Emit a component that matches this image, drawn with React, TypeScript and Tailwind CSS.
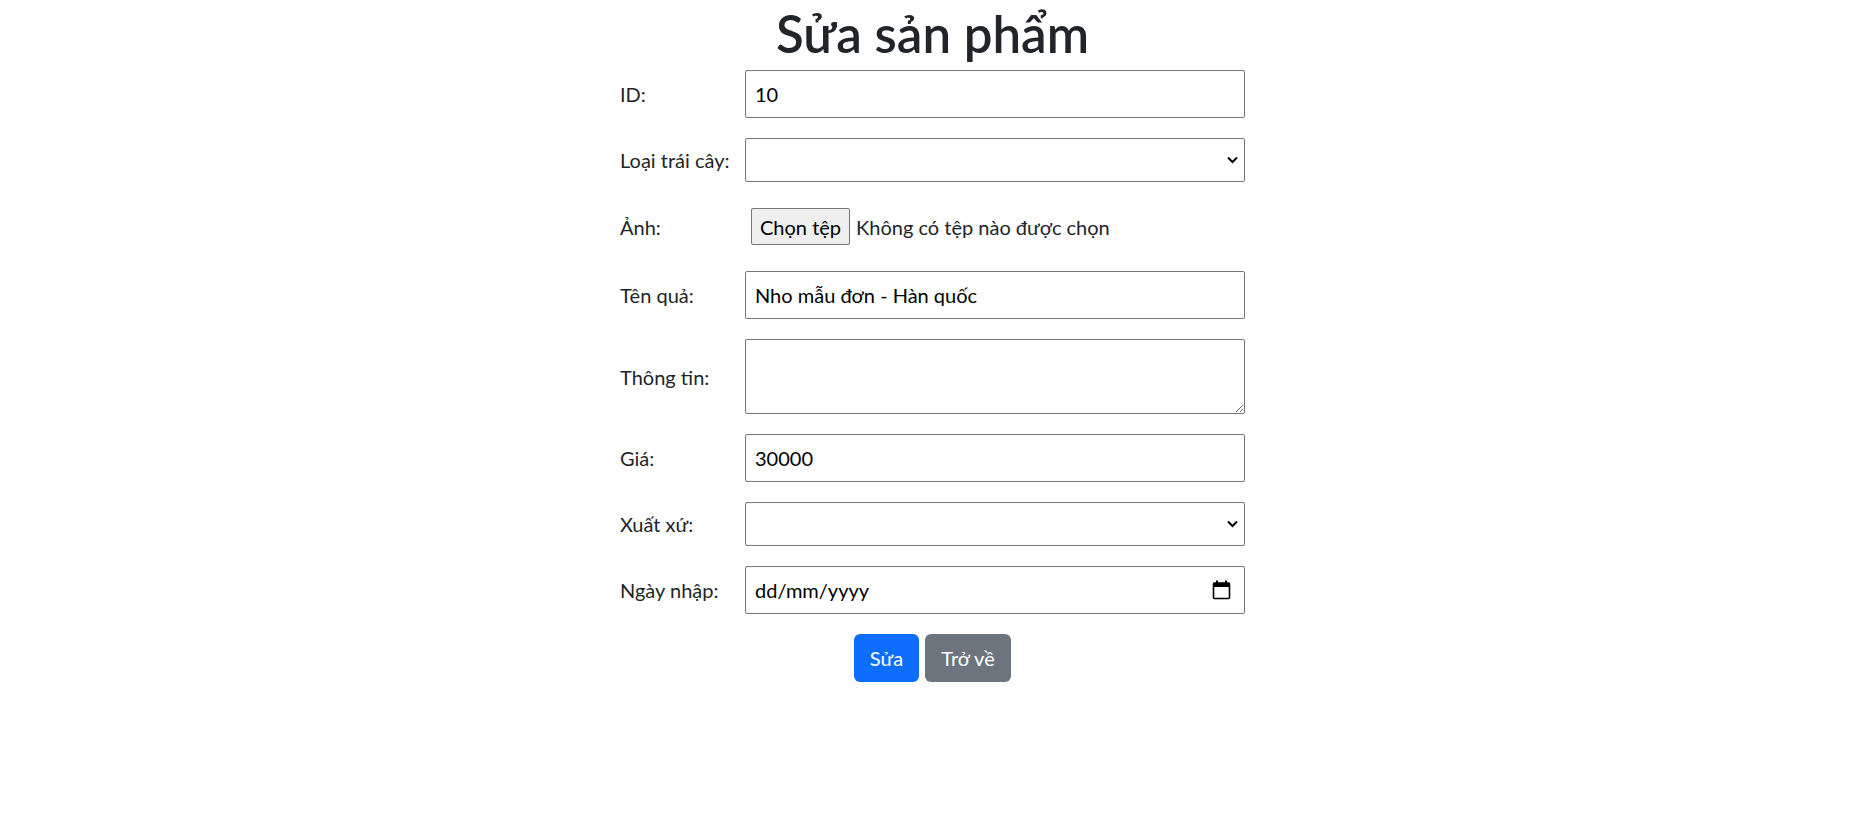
import React from 'react';

const inputCls =
  'w-full h-[48px] border border-[#767676] rounded-[2px] bg-white pl-[9px] text-black outline-none';

function Row({ label, children, className = '' }: { label: string; children: React.ReactNode; className?: string }) {
  return (
    <div className={`flex items-center ${className}`}>
      <label className="w-[125px] shrink-0 text-[#212529]">{label}</label>
      <div className="flex-1 flex items-center">{children}</div>
    </div>
  );
}

function Chevron() {
  return (
    <svg width="11" height="8" viewBox="0 0 11 8" className="absolute right-[7px] top-1/2 -translate-y-1/2 pointer-events-none">
      <path d="M1 1.5 L5.5 6 L10 1.5" fill="none" stroke="#000" strokeWidth="2" />
    </svg>
  );
}

function CalendarIcon() {
  return (
    <svg width="19" height="20" viewBox="0 0 19 20">
      <rect x="1.5" y="3" width="16" height="15.5" fill="none" stroke="#000" strokeWidth="1.6" rx="1" />
      <rect x="1.5" y="3" width="16" height="4" fill="#000" />
      <rect x="4" y="0.5" width="2" height="3" fill="#000" />
      <rect x="13" y="0.5" width="2" height="3" fill="#000" />
    </svg>
  );
}

export default function App() {
  return (
    <div
      className="min-h-screen bg-white text-[20px]"
      style={{ fontFamily: "Lato, 'Noto Sans', sans-serif" }}
    >
      <h1 className="h-[70px] text-center text-[51px] leading-[68px] font-semibold text-[#212529]">
        Sửa sản phẩm
      </h1>
      <form className="w-[625px] mx-auto flex flex-col gap-5">
        <Row label="ID:">
          <input type="text" defaultValue="10" className={inputCls} />
        </Row>
        <Row label="Loại trái cây:">
          <div className="relative w-full">
            <select className="w-full h-[44px] appearance-none border border-[#767676] rounded-[2px] bg-white text-black outline-none">
              <option value=""></option>
            </select>
            <Chevron />
          </div>
        </Row>
        <Row label="Ảnh:" className="h-[49px]">
          <button
            type="button"
            className="ml-[6px] h-[37px] px-[8px] bg-[#efefef] border border-[#767676] rounded-[2px] text-black"
          >
            Chọn tệp
          </button>
          <span className="ml-[6px] text-[#212529]">Không có tệp nào được chọn</span>
        </Row>
        <Row label="Tên quả:">
          <input type="text" defaultValue="Nho mẫu đơn - Hàn quốc" className={`${inputCls} h-[47px]`} />
        </Row>
        <Row label="Thông tin:">
          <textarea className="w-full h-[75px] border border-[#767676] rounded-[2px] bg-white outline-none resize" />
        </Row>
        <Row label="Giá:">
          <input type="text" defaultValue="30000" className={inputCls} />
        </Row>
        <Row label="Xuất xứ:">
          <div className="relative w-full">
            <select className="w-full h-[44px] appearance-none border border-[#767676] rounded-[2px] bg-white text-black outline-none">
              <option value=""></option>
            </select>
            <Chevron />
          </div>
        </Row>
        <Row label="Ngày nhập:">
          <div className="w-full h-[48px] border border-[#767676] rounded-[2px] bg-white pl-[9px] pr-[13px] flex items-center justify-between text-black">
            <span>dd/mm/yyyy</span>
            <CalendarIcon />
          </div>
        </Row>
        <div className="flex justify-center gap-[6px]">
          <button type="submit" className="h-[48px] w-[65px] rounded-[6px] bg-[#0d6efd] text-white">
            Sửa
          </button>
          <button type="button" className="h-[48px] w-[86px] rounded-[6px] bg-[#6c757d] text-white">
            Trở về
          </button>
        </div>
      </form>
    </div>
  );
}
